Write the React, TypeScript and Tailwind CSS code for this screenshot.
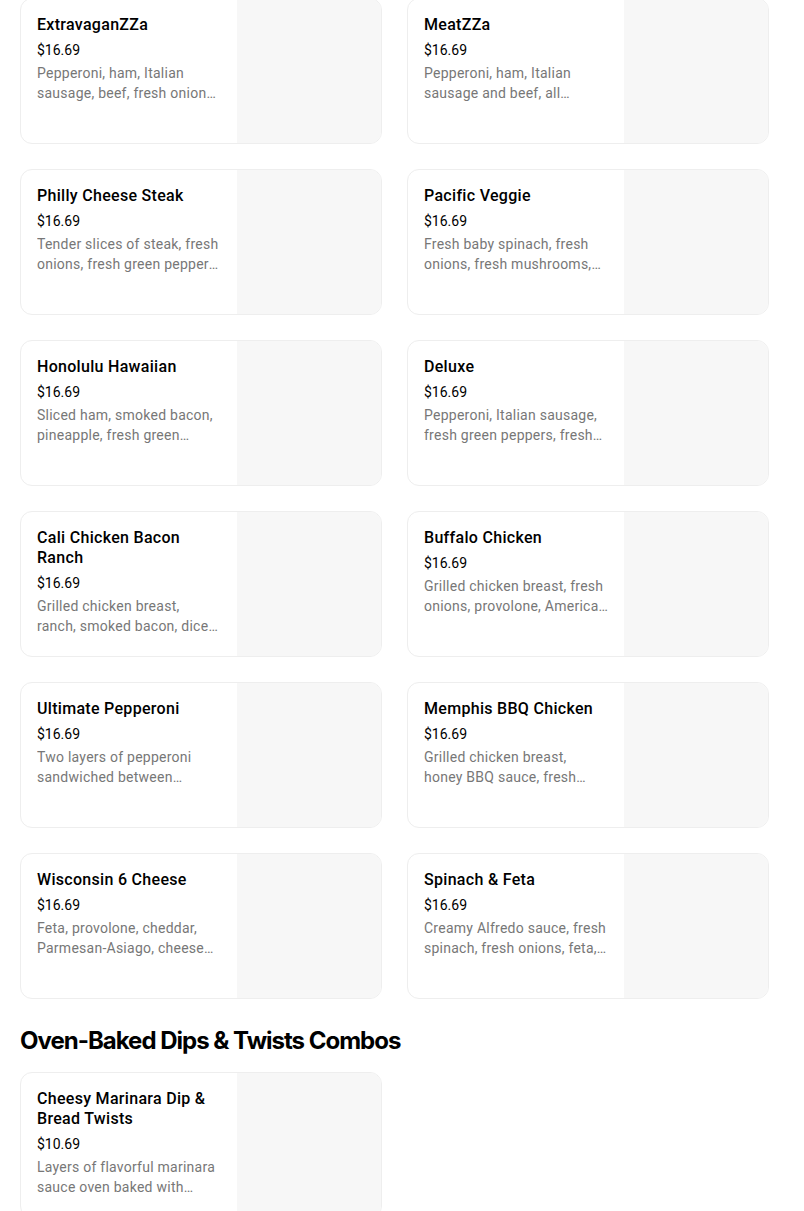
const pizzas = [
  { name: "ExtravaganZZa", price: "$16.69", desc: "Pepperoni, ham, Italian sausage, beef, fresh onions, fresh green peppers, fresh mushrooms and black olives" },
  { name: "MeatZZa", price: "$16.69", desc: "Pepperoni, ham, Italian sausage and beef, all sandwiched between two layers of cheese" },
  { name: "Philly Cheese Steak", price: "$16.69", desc: "Tender slices of steak, fresh onions, fresh green peppers, fresh mushrooms, provolone and American cheese" },
  { name: "Pacific Veggie", price: "$16.69", desc: "Fresh baby spinach, fresh onions, fresh mushrooms, tomatoes, black olives, feta, provolone" },
  { name: "Honolulu Hawaiian", price: "$16.69", desc: "Sliced ham, smoked bacon, pineapple, fresh green peppers, provolone" },
  { name: "Deluxe", price: "$16.69", desc: "Pepperoni, Italian sausage, fresh green peppers, fresh mushrooms and fresh onions" },
  { name: "Cali Chicken Bacon Ranch", price: "$16.69", desc: "Grilled chicken breast, ranch, smoked bacon, diced tomatoes, provolone" },
  { name: "Buffalo Chicken", price: "$16.69", desc: "Grilled chicken breast, fresh onions, provolone, American cheese, cheddar" },
  { name: "Ultimate Pepperoni", price: "$16.69", desc: "Two layers of pepperoni sandwiched between provolone" },
  { name: "Memphis BBQ Chicken", price: "$16.69", desc: "Grilled chicken breast, honey BBQ sauce, fresh onions, provolone, cheddar" },
  { name: "Wisconsin 6 Cheese", price: "$16.69", desc: "Feta, provolone, cheddar, Parmesan-Asiago, cheese made with 100% real mozzarella" },
  { name: "Spinach & Feta", price: "$16.69", desc: "Creamy Alfredo sauce, fresh spinach, fresh onions, feta, Parmesan-Asiago" },
];

const combos = [
  { name: "Cheesy Marinara Dip & Bread Twists", price: "$10.69", desc: "Layers of flavorful marinara sauce oven baked with cheese" },
];

type Item = { name: string; price: string; desc: string };

function ItemCard({ item }: { item: Item }) {
  return (
    <div className="flex h-[146px] overflow-hidden rounded-xl border border-[#eeeeee] bg-white">
      <div className="min-w-0 flex-1 px-4 pt-4">
        <div className="text-[16px] font-medium leading-5 tracking-[0.3px] text-black">{item.name}</div>
        <div className="mt-[5px] text-[14px] leading-5 text-black">{item.price}</div>
        <div className="mt-[3px] line-clamp-2 text-[14px] leading-5 tracking-[0.25px] text-[#777777]">{item.desc}</div>
      </div>
      <div className="w-[144px] shrink-0 bg-[#f7f7f7]" />
    </div>
  );
}

export default function App() {
  return (
    <div className="min-h-[1211px] bg-white px-5 font-['Roboto','Liberation_Sans',sans-serif]">
      <div className="-mt-[2px] grid w-[749px] grid-cols-2 gap-[25px]">
        {pizzas.map((p) => (
          <ItemCard key={p.name} item={p} />
        ))}
      </div>

      <h2 className="mt-[26px] font-['Inter','Liberation_Sans',sans-serif] text-[24px] font-bold leading-8 tracking-[-1px] text-black">
        Oven-Baked Dips &amp; Twists Combos
      </h2>

      <div className="mt-[15px] grid w-[749px] grid-cols-2 gap-[25px]">
        {combos.map((p) => (
          <ItemCard key={p.name} item={p} />
        ))}
      </div>
    </div>
  );
}
